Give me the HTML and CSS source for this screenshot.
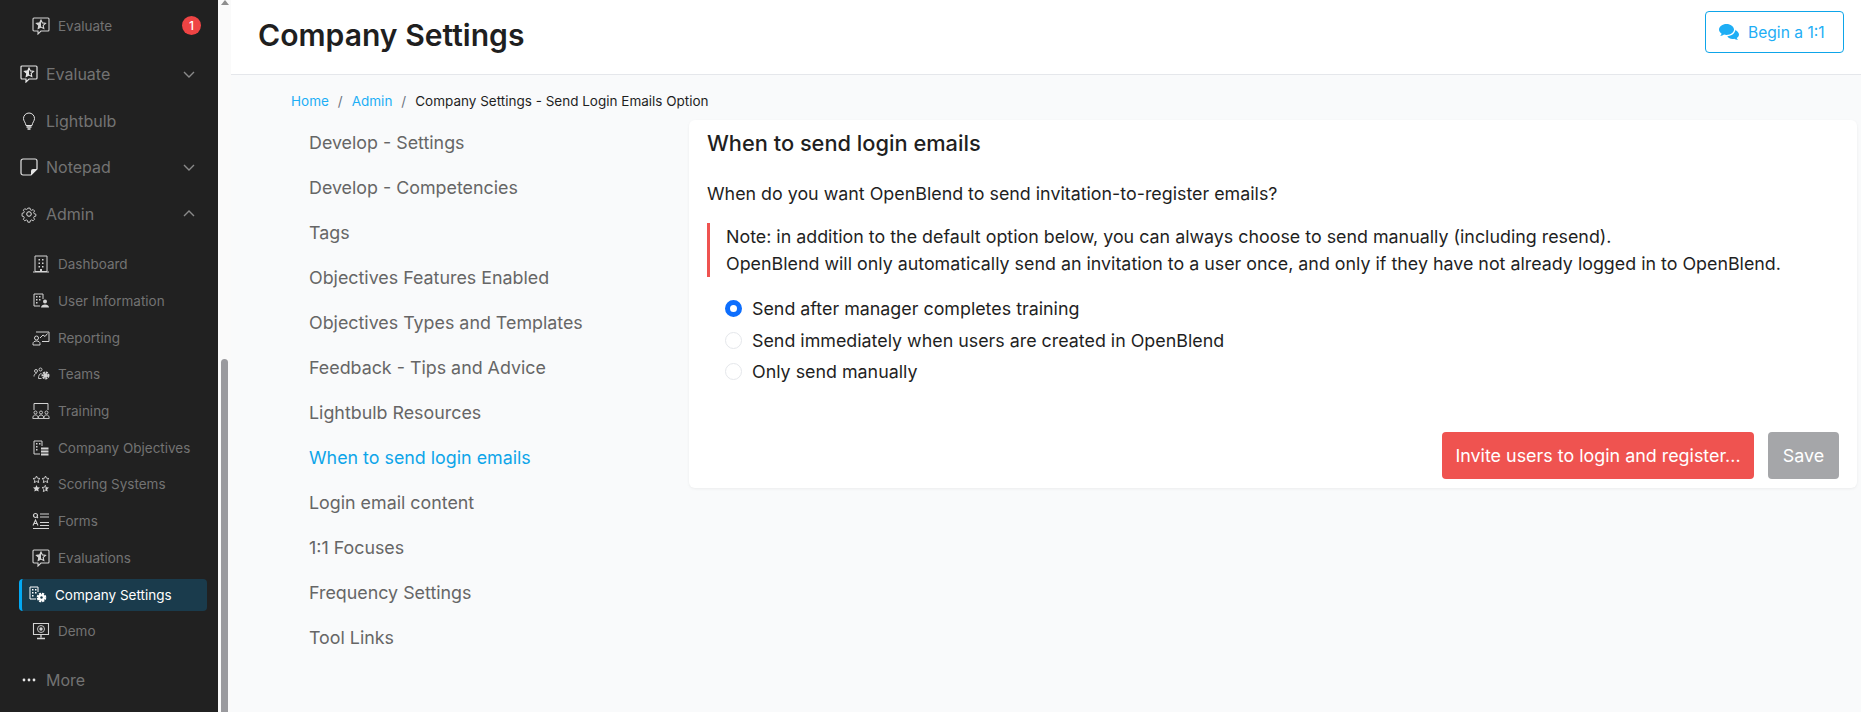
FILE: index.html
```html
<!DOCTYPE html>
<html lang="en">
<head>
  <meta charset="UTF-8">
  <title>Company Settings</title>
  <link rel="stylesheet" href="styles.css">
</head>
<body>
  <aside class="sidebar">
    <a class="sub-item first-item">
      <svg class="sub-icon" viewBox="0 0 18 18"><path d="M2 1h14a1 1 0 0 1 1 1v11a1 1 0 0 1-1 1H9l-3 3v-3H2a1 1 0 0 1-1-1V2a1 1 0 0 1 1-1z" fill="none" stroke="currentColor" stroke-width="1.1"/><path d="M9 3l1.400 2.900 3.100.4-2.300 2.100.6 3.100L9 10l-2.800 1.500.6-3.100-2.300-2.100 3.100-.4z" fill="none" stroke="currentColor" stroke-width="1.100"/><path d="M9 3v7l-2.800 1.500.6-3.100-2.300-2.100 3.100-.4z" fill="currentColor"/></svg>
      <span>Evaluate</span>
      <b class="badge">1</b>
    </a>
    <a class="main-item">
      <svg class="main-icon" viewBox="0 0 18 18"><path d="M2 1h14a1 1 0 0 1 1 1v11a1 1 0 0 1-1 1H9l-3 3v-3H2a1 1 0 0 1-1-1V2a1 1 0 0 1 1-1z" fill="none" stroke="currentColor" stroke-width="1.2"/><path d="M9 3l1.400 2.900 3.100.4-2.300 2.100.6 3.100L9 10l-2.800 1.500.6-3.100-2.300-2.100 3.100-.4z" fill="none" stroke="currentColor" stroke-width="1.100"/><path d="M9 3v7l-2.800 1.500.6-3.100-2.300-2.100 3.100-.4z" fill="currentColor"/></svg>
      <span>Evaluate</span>
      <svg class="chevron" viewBox="0 0 12 7"><path d="M1 1l5 5 5-5" fill="none" stroke="currentColor" stroke-width="1.400"/></svg>
    </a>
    <a class="main-item">
      <svg class="main-icon" viewBox="0 0 18 18"><path d="M9 1a5.500 5.500 0 0 0-5.500 5.500c0 2.500 2 3.800 2.500 7h6c.5-3.200 2.500-4.500 2.500-7A5.500 5.500 0 0 0 9 1z" fill="none" stroke="currentColor" stroke-width="1"/><path d="M6.500 15h5M7.500 17h3" stroke="currentColor" stroke-width="1.300"/></svg>
      <span>Lightbulb</span>
    </a>
    <a class="main-item">
      <svg class="main-icon" viewBox="0 0 18 18"><path d="M3 1h12a2 2 0 0 1 2 2v8l-6 6H3a2 2 0 0 1-2-2V3a2 2 0 0 1 2-2z" fill="none" stroke="currentColor" stroke-width="1.200"/><path d="M11 17v-4a2 2 0 0 1 2-2h4z" fill="currentColor"/></svg>
      <span>Notepad</span>
      <svg class="chevron" viewBox="0 0 12 7"><path d="M1 1l5 5 5-5" fill="none" stroke="currentColor" stroke-width="1.400"/></svg>
    </a>
    <a class="main-item">
      <svg class="main-icon" viewBox="0 0 18 18"><circle cx="9" cy="9" r="2.300" fill="none" stroke="currentColor"/><path d="M7.700 2h2.600l.4 2 1.500.7 1.800-1 1.700 1.800-1.100 1.700.6 1.500 2 .5v2.400l-2 .5-.6 1.500 1.100 1.700-1.700 1.800-1.800-1-1.500.7-.4 2H7.700l-.4-2-1.500-.7-1.800 1-1.700-1.800 1.100-1.700-.6-1.500-2-.5V8.200l2-.5.6-1.500L2.300 4.500 4 2.700l1.800 1 1.500-.7z" fill="none" stroke="currentColor" transform="translate(1.400 1.400) scale(.84)"/></svg>
      <span>Admin</span>
      <svg class="chevron" viewBox="0 0 12 7"><path d="M1 6l5-5 5 5" fill="none" stroke="currentColor" stroke-width="1.400"/></svg>
    </a>

    <nav class="sub-list">
      <a class="sub-item">
        <svg class="sub-icon" viewBox="0 0 18 18"><path d="M3 1h12v15.500H3zM1 17h16" fill="none" stroke="currentColor"/><path d="M6.500 4h1.500v1.500H6.500zM10 4h1.500v1.500H10zM6.500 7.500h1.500V9H6.500zM10 7.500h1.500V9H10zM6.500 11h1.500v1.500H6.500zM10 11h1.500v1.500H10zM8 14h2v3H8z" fill="currentColor"/></svg>
        <span>Dashboard</span>
      </a>
      <a class="sub-item">
        <svg class="sub-icon" viewBox="0 0 18 18"><path d="M8 14H2V2h9v5" fill="none" stroke="currentColor"/><path d="M4 4h1.500v1.500H4zM7 4h1.500v1.500H7zM4 7h1.500v1.500H4zM7 7h1.500v1.500H7zM4 10h1.500v1.500H4z" fill="currentColor"/><circle cx="13" cy="9.500" r="2" fill="currentColor"/><path d="M9 15.500c0-2 2-3 4-3s4 1 4 3z" fill="currentColor"/></svg>
        <span>User Information</span>
      </a>
      <a class="sub-item">
        <svg class="sub-icon" viewBox="0 0 18 18"><path d="M4 3h13v9.500H10" fill="none" stroke="currentColor"/><path d="M8 9l3-3 2 1.500 2.500-3" fill="none" stroke="currentColor"/><circle cx="4.500" cy="9" r="2" fill="none" stroke="currentColor"/><path d="M1 16v-1.500c0-1.500 1.500-2.500 3.500-2.500S8 13 8 14.500V16z" fill="none" stroke="currentColor"/></svg>
        <span>Reporting</span>
      </a>
      <a class="sub-item">
        <svg class="sub-icon" viewBox="0 0 18 18"><circle cx="4" cy="6" r="1.500" fill="none" stroke="currentColor" stroke-width=".9"/><circle cx="8.500" cy="4.500" r="1.500" fill="none" stroke="currentColor" stroke-width=".9"/><path d="M2 11.500c0-2 1-3 2.500-3M6.500 13.500h3M6.500 13.500c0-3 1-5 3-5" fill="none" stroke="currentColor" stroke-width=".9"/><circle cx="13.500" cy="10.500" r="3" fill="none" stroke="currentColor" stroke-width="2" stroke-dasharray="2 .8"/><circle cx="13.500" cy="10.500" r="2.300" fill="currentColor"/></svg>
        <span>Teams</span>
      </a>
      <a class="sub-item">
        <svg class="sub-icon" viewBox="0 0 18 18"><path d="M2 8V1.500h14V8" fill="none" stroke="currentColor"/><circle cx="3.500" cy="10.500" r="1.500" fill="none" stroke="currentColor" stroke-width=".9"/><circle cx="9" cy="10.500" r="1.500" fill="none" stroke="currentColor" stroke-width=".9"/><circle cx="14.500" cy="10.500" r="1.500" fill="none" stroke="currentColor" stroke-width=".9"/><path d="M.8 16.500c0-2.500 1-3.500 2.700-3.500s2.700 1 2.700 3.500zM6.300 16.500c0-2.500 1-3.500 2.700-3.500s2.700 1 2.700 3.500zM11.800 16.500c0-2.500 1-3.500 2.700-3.500s2.700 1 2.700 3.500z" fill="none" stroke="currentColor" stroke-width=".9"/></svg>
        <span>Training</span>
      </a>
      <a class="sub-item">
        <svg class="sub-icon" viewBox="0 0 18 18"><path d="M8 15H2V2h8v5" fill="none" stroke="currentColor"/><path d="M4 4h1.500v1.500H4zM7 4h1.500v1.500H7zM4 7h1.500v1.500H4zM4 10h1.500v1.500H4zM9 8.500h7.500v2H9zM9 11.500h7.500v2H9zM9 14.500h7.500v2H9z" fill="currentColor"/></svg>
        <span>Company Objectives</span>
      </a>
      <a class="sub-item">
        <svg class="sub-icon" viewBox="0 0 18 18"><path d="M4.500 1l1 2.200 2.500.3-1.800 1.700.5 2.400-2.200-1.200-2.200 1.200.5-2.400L1 3.500l2.500-.3zM13.500 1l1 2.200 2.500.3-1.800 1.700.5 2.400-2.200-1.200-2.200 1.200.5-2.400L10 3.500l2.500-.3z" fill="none" stroke="currentColor" stroke-width=".9"/><path d="M4.500 10l1 2.200 2.500.3-1.800 1.700.5 2.400-2.200-1.200-2.200 1.200.5-2.400L1 12.500l2.500-.3z" fill="currentColor"/><path d="M13.500 10l1 2.200 2.500.3-1.800 1.700.5 2.400-2.200-1.200z" fill="currentColor"/><path d="M13.500 10l-1 2.200-2.500.3 1.800 1.700-.5 2.400 2.200-1.200" fill="none" stroke="currentColor" stroke-width=".9"/></svg>
        <span>Scoring Systems</span>
      </a>
      <a class="sub-item">
        <svg class="sub-icon" viewBox="0 0 18 18"><circle cx="3.500" cy="3.500" r="2" fill="none" stroke="currentColor" stroke-width="1.200"/><path d="M5 5l1 1M8 2h9M8 5h9M8 10.500h9M8 13.500h9M1 16.500h16" stroke="currentColor" stroke-width="1.100"/><path d="M1 13.500L3.500 8 6 13.500M2 11.500h3" fill="none" stroke="currentColor" stroke-width="1.100"/></svg>
        <span>Forms</span>
      </a>
      <a class="sub-item">
        <svg class="sub-icon" viewBox="0 0 18 18"><path d="M2 1h14a1 1 0 0 1 1 1v11a1 1 0 0 1-1 1H9l-3 3v-3H2a1 1 0 0 1-1-1V2a1 1 0 0 1 1-1z" fill="none" stroke="currentColor" stroke-width="1.100"/><path d="M9 3l1.400 2.900 3.100.4-2.300 2.100.6 3.100L9 10l-2.800 1.500.6-3.100-2.300-2.100 3.100-.4z" fill="none" stroke="currentColor" stroke-width="1.100"/><path d="M9 3v7l-2.800 1.500.6-3.100-2.300-2.100 3.100-.4z" fill="currentColor"/></svg>
        <span>Evaluations</span>
      </a>
      <a class="sub-item is-active">
        <svg class="sub-icon" viewBox="0 0 18 18"><path d="M7 13H1V1h8v5" fill="none" stroke="currentColor"/><path d="M3 3h1.500v1.500H3zM6 3h1.500v1.500H6zM3 6h1.500v1.500H3zM6 6h1.500v1.500H6zM3 9h1.500v1.500H3z" fill="currentColor"/><circle cx="12.500" cy="11.500" r="3.500" fill="none" stroke="currentColor" stroke-width="2.600" stroke-dasharray="2 .75"/><circle cx="12.500" cy="11.500" r="3.300" fill="currentColor"/><circle cx="12.500" cy="11.500" r="1.200" fill="#1a3b4c"/></svg>
        <span>Company Settings</span>
      </a>
      <a class="sub-item">
        <svg class="sub-icon" viewBox="0 0 18 18"><path d="M1.500 1.500h15v11h-15z" fill="none" stroke="currentColor" stroke-width="1.100"/><circle cx="9" cy="7" r="3.500" fill="none" stroke="currentColor" stroke-width=".9"/><circle cx="9" cy="7" r="1.700" fill="currentColor"/><path d="M9 13v2.500M5 16.500h8" stroke="currentColor" stroke-width="1.300"/></svg>
        <span>Demo</span>
      </a>
    </nav>

    <a class="main-item more-item">
      <svg class="main-icon" viewBox="0 0 18 18"><circle cx="4" cy="9" r="1.400" fill="currentColor"/><circle cx="9" cy="9" r="1.400" fill="currentColor"/><circle cx="14" cy="9" r="1.400" fill="currentColor"/></svg>
      <span>More</span>
    </a>
  </aside>

  <div class="scroll-rail">
    <i class="scroll-arrow"></i>
    <i class="scroll-thumb"></i>
  </div>

  <div class="main">
    <header class="top-bar">
      <h1>Company Settings</h1>
      <a class="begin-button">
        <svg viewBox="0 0 20 17"><path d="M7.500 0C3.400 0 0 2.500 0 5.600c0 1.700 1 3.200 2.600 4.200-.3.900-.8 1.700-1.500 2.300 1.500-.1 2.900-.6 4-1.500.8.200 1.600.3 2.400.3 4.100 0 7.500-2.400 7.500-5.300S11.600 0 7.500 0z" fill="currentColor"/><path d="M16.300 5.600c0 3.800-3.700 6.500-8 6.700 1 1.700 3 2.700 5.200 2.700.6 0 1.200-.1 1.800-.2.900.7 2.400 1.200 3.700 1.200-.6-.5-1-1.200-1.200-1.900 1.300-.8 2.200-2 2.200-3.500 0-2-1.600-3.900-4-4.700z" fill="currentColor"/></svg>
        Begin a 1:1
      </a>
    </header>

    <div class="breadcrumb">
      <a>Home</a><i>/</i><a>Admin</a><i>/</i><span>Company Settings - Send Login Emails Option</span>
    </div>

    <div class="columns">
      <nav class="settings-nav">
        <a>Develop - Settings</a>
        <a>Develop - Competencies</a>
        <a>Tags</a>
        <a>Objectives Features Enabled</a>
        <a>Objectives Types and Templates</a>
        <a>Feedback - Tips and Advice</a>
        <a>Lightbulb Resources</a>
        <a class="is-current">When to send login emails</a>
        <a>Login email content</a>
        <a>1:1 Focuses</a>
        <a>Frequency Settings</a>
        <a>Tool Links</a>
      </nav>

      <section class="card">
        <h2>When to send login emails</h2>
        <p class="question">When do you want OpenBlend to send invitation-to-register emails?</p>
        <div class="note">
          <p>Note: in addition to the default option below, you can always choose to send manually (including resend).</p>
          <p>OpenBlend will only automatically send an invitation to a user once, and only if they have not already logged in to OpenBlend.</p>
        </div>
        <div class="options">
          <label><input type="radio" name="when" checked> Send after manager completes training</label>
          <label><input type="radio" name="when"> Send immediately when users are created in OpenBlend</label>
          <label><input type="radio" name="when"> Only send manually</label>
        </div>
        <div class="actions">
          <button class="btn-red">Invite users to login and register...</button>
          <button class="btn-grey">Save</button>
        </div>
      </section>
    </div>
  </div>
</body>
</html>
```

FILE: styles.css
```css
* {
  box-sizing: border-box;
}

body {
  margin: 0;
  display: flex;
  height: 100vh;
  overflow: hidden;
  background: #f9fafb;
  color: #1f1f1f;
  font-family: Inter, "Liberation Sans", sans-serif;
}

/* sidebar */
.sidebar {
  width: 218px;
  flex: none;
  background: #212121;
  color: #737373;
}

.main-item {
  display: flex;
  align-items: center;
  height: 46.5px;
  padding: 0 23px 0 20px;
  font-size: 16px;
}

.main-icon {
  width: 18px;
  height: 18px;
  margin-right: 8px;
  color: #e5e5e5;
}

.chevron {
  width: 12px;
  height: 7px;
  margin-left: auto;
  color: #8a8a8a;
}

.sub-list {
  padding-top: 9px;
}

.sub-item {
  display: flex;
  align-items: center;
  height: 36.7px;
  padding: 0 17px 0 32px;
  font-size: 13.5px;
}

.first-item {
  height: 51px;
}

.sub-icon {
  width: 18px;
  height: 18px;
  margin-right: 8px;
  color: #d4d4d4;
}

.badge {
  width: 19px;
  height: 19px;
  margin-left: auto;
  border-radius: 50%;
  background: #ef4444;
  color: #fff;
  font-size: 12px;
  font-weight: 500;
  line-height: 19px;
  text-align: center;
}

.sub-item.is-active {
  width: 188px;
  height: 32px;
  margin: 2.400px 0 2.400px 19px;
  padding-left: 7px;
  border-left: 3px solid #03a9f4;
  border-radius: 4px;
  background: #1a3b4c;
  color: #fff;
}

.is-active .sub-icon {
  color: #fff;
}

.more-item {
  margin-top: 7px;
}

/* fake scrollbar */
.scroll-rail {
  width: 13px;
  flex: none;
  display: flex;
  flex-direction: column;
  justify-content: space-between;
  align-items: center;
  background: #fafafa;
}

.scroll-arrow {
  width: 0;
  height: 0;
  border: 4px solid transparent;
  border-top: 0;
  border-bottom: 5px solid #8e8e8e;
}

.scroll-thumb {
  width: 7px;
  height: 353px;
  border-radius: 4px 4px 0 0;
  background: #9a9a9e;
}

/* main */
.main {
  flex: 1;
  min-width: 0;
}

.top-bar {
  display: flex;
  align-items: flex-start;
  justify-content: space-between;
  height: 75px;
  padding: 11px 17px 0 27px;
  border-bottom: 1px solid #e5e7eb;
  background: #fff;
}

h1 {
  margin: 0;
  color: #1f1f1f;
  font-size: 30.1px;
  font-weight: 600;
  line-height: 48px;
}

.begin-button {
  display: flex;
  align-items: center;
  gap: 9px;
  width: 139px;
  height: 42px;
  padding-left: 13px;
  border: 1px solid #0ea5e9;
  border-radius: 4px;
  color: #1eaef5;
  font-size: 15.6px;
}

.begin-button svg {
  width: 20px;
  height: 17px;
}

.breadcrumb {
  display: flex;
  align-items: center;
  height: 45px;
  padding: 7px 0 0 60px;
  font-size: 13.5px;
}

.breadcrumb a {
  color: #1eaef5;
}

.breadcrumb i {
  margin: 0 9px;
  color: #6b7280;
  font-style: normal;
}

.columns {
  display: flex;
  align-items: flex-start;
}

.settings-nav {
  width: 458px;
  flex: none;
  display: flex;
  flex-direction: column;
  padding-left: 78px;
}

.settings-nav a {
  height: 45px;
  color: #666;
  font-size: 17.85px;
  line-height: 45px;
}

.settings-nav .is-current {
  color: #0ea5e9;
}

.card {
  width: 1168px;
  height: 368px;
  display: flex;
  flex-direction: column;
  padding: 0 8px 9px 18px;
  border-radius: 6px;
  background: #fff;
  box-shadow: 0 1px 3px rgba(0, 0, 0, 0.06);
}

h2 {
  margin: 9px 0 0;
  color: #1f1f1f;
  font-size: 21.8px;
  font-weight: 500;
  line-height: 28px;
}

.question {
  margin: 24px 0 0;
  font-size: 17.85px;
  line-height: 26px;
}

.note {
  margin-top: 16px;
  padding-left: 16px;
  border-left: 3.500px solid #ef5350;
  font-size: 17.85px;
  line-height: 27px;
}

.note p {
  margin: 0;
}

.options {
  display: flex;
  flex-direction: column;
  margin-top: 16px;
  padding-left: 17px;
  font-size: 17.85px;
  line-height: 31.500px;
}

.options label {
  display: flex;
  align-items: center;
  gap: 10px;
}

.options input {
  appearance: none;
  width: 17px;
  height: 17px;
  margin: 0 0 0 1px;
  border: 1px solid #e5e7eb;
  border-radius: 50%;
  background: #fff;
}

.options input:checked {
  border: 5px solid #0d6efd;
}

.actions {
  display: flex;
  justify-content: flex-end;
  gap: 14px;
  margin: auto 10px 0 0;
}

.actions button {
  height: 47px;
  border: none;
  border-radius: 4px;
  color: #fff;
  font-family: inherit;
  font-size: 17.9px;
}

.btn-red {
  width: 312px;
  background: #ef5350;
}

.btn-grey {
  width: 71px;
  background: #a5a6a9;
  color: #f1f1f1;
}
```
